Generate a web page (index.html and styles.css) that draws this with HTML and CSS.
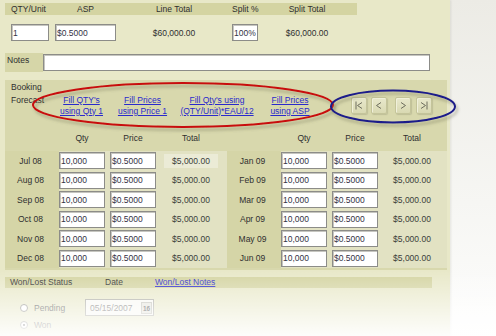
FILE: index.html
```html
<!DOCTYPE html>
<html>
<head>
<meta charset="utf-8">
<link rel="stylesheet" href="styles.css">
</head>
<body>
<div class="page">
  <div class="panel">
    <div class="row5 hdr">
      <span>QTY/Unit</span>
      <span class="asp">ASP</span>
      <span class="c3">Line Total</span>
      <span>Split %</span>
      <span class="ctr">Split Total</span>
    </div>
    <div class="row5 vals">
      <input class="in w38" value="1">
      <input class="in w61" value="$0.5000">
      <span class="c3">$60,000.00</span>
      <input class="in w26" value="100%">
      <span class="ctr">$60,000.00</span>
    </div>
    <div class="notes">
      <span class="notes-lbl">Notes</span>
      <input class="in notes-in" value="">
    </div>

    <div class="booking">
      <div class="bk-top">
        <div class="bk-lbl">Booking<br>Forecast</div>
        <a class="lk l1" href="#">Fill QTY's<br>using Qty 1</a>
        <a class="lk l2" href="#">Fill Prices<br>using Price 1</a>
        <a class="lk l3" href="#">Fill Qty's using<br>(QTY/Unit)*EAU/12</a>
        <a class="lk l4" href="#">Fill Prices<br>using ASP</a>
        <div class="nav">
          <span class="nb"><svg viewBox="0 0 16 17" width="16" height="17"><path d="M5 4.5v8M11 5.5L6.5 8.5L11 11.5" fill="none" stroke="#6e6e5e" stroke-width="1"/></svg></span>
          <span class="nb n2"><svg viewBox="0 0 16 17" width="16" height="17"><path d="M10 5.5L5.5 8.5L10 11.5" fill="none" stroke="#6e6e5e" stroke-width="1"/></svg></span>
          <span class="nb n3"><svg viewBox="0 0 16 17" width="16" height="17"><path d="M6 5.5L10.5 8.5L6 11.5" fill="none" stroke="#6e6e5e" stroke-width="1"/></svg></span>
          <span class="nb n4"><svg viewBox="0 0 16 17" width="16" height="17"><path d="M11 4.5v8M5 5.5L9.5 8.5L5 11.5" fill="none" stroke="#6e6e5e" stroke-width="1"/></svg></span>
        </div>
      </div>
      <div class="bk-grid">
        <span></span><span class="ch">Qty</span><span class="ch">Price</span><span class="ch t">Total</span>
        <span></span><span class="ch">Qty</span><span class="ch">Price</span><span class="ch t">Total</span>

        <span class="m">Jul 08</span><span class="d"><input class="in cell" value="10,000"></span><span class="d"><input class="in cell" value="$0.5000"></span><span class="d tot"><span class="hl">$5,000.00</span></span>
        <span class="m">Jan 09</span><span class="d"><input class="in cell" value="10,000"></span><span class="d"><input class="in cell" value="$0.5000"></span><span class="d tot">$5,000.00</span>

        <span class="m">Aug 08</span><span class="d"><input class="in cell" value="10,000"></span><span class="d"><input class="in cell" value="$0.5000"></span><span class="d tot">$5,000.00</span>
        <span class="m">Feb 09</span><span class="d"><input class="in cell" value="10,000"></span><span class="d"><input class="in cell" value="$0.5000"></span><span class="d tot">$5,000.00</span>

        <span class="m">Sep 08</span><span class="d"><input class="in cell" value="10,000"></span><span class="d"><input class="in cell" value="$0.5000"></span><span class="d tot">$5,000.00</span>
        <span class="m">Mar 09</span><span class="d"><input class="in cell" value="10,000"></span><span class="d"><input class="in cell" value="$0.5000"></span><span class="d tot">$5,000.00</span>

        <span class="m">Oct 08</span><span class="d"><input class="in cell" value="10,000"></span><span class="d"><input class="in cell" value="$0.5000"></span><span class="d tot">$5,000.00</span>
        <span class="m">Apr 09</span><span class="d"><input class="in cell" value="10,000"></span><span class="d"><input class="in cell" value="$0.5000"></span><span class="d tot">$5,000.00</span>

        <span class="m">Nov 08</span><span class="d"><input class="in cell" value="10,000"></span><span class="d"><input class="in cell" value="$0.5000"></span><span class="d tot">$5,000.00</span>
        <span class="m">May 09</span><span class="d"><input class="in cell" value="10,000"></span><span class="d"><input class="in cell" value="$0.5000"></span><span class="d tot">$5,000.00</span>

        <span class="m">Dec 08</span><span class="d"><input class="in cell" value="10,000"></span><span class="d"><input class="in cell" value="$0.5000"></span><span class="d tot">$5,000.00</span>
        <span class="m">Jun 09</span><span class="d"><input class="in cell" value="10,000"></span><span class="d"><input class="in cell" value="$0.5000"></span><span class="d tot">$5,000.00</span>
      </div>
    </div>

    <div class="wl-bar">
      <span class="wl-status">Won/Lost Status</span>
      <span class="wl-date">Date</span>
      <a class="wl-link" href="#">Won/Lost Notes</a>
    </div>
    <div class="wl-body">
      <div class="radios">
        <div class="ro"><span class="rad"></span><span class="rt">Pending</span></div>
        <div class="ro"><span class="rad on"></span><span class="rt">Won</span></div>
        <div class="ro"><span class="rad"></span></div>
      </div>
      <div class="date"><span>05/15/2007</span><span class="cal">16</span></div>
    </div>
  </div>

  <svg class="marks" width="496" height="336" viewBox="0 0 496 336">
    <defs>
      <filter id="sh" x="-10%" y="-30%" width="120%" height="170%">
        <feDropShadow dx="2" dy="3" stdDeviation="1.6" flood-color="#6b6b50" flood-opacity="0.45"/>
      </filter>
    </defs>
    <ellipse cx="183" cy="105" rx="150" ry="22" fill="none" stroke="#c81010" stroke-width="2" filter="url(#sh)"/>
    <ellipse cx="393" cy="106.5" rx="62" ry="16" fill="none" stroke="#1c1c8a" stroke-width="2" filter="url(#sh)"/>
  </svg>
  <div class="fade"></div>
</div>
</body>
</html>
```

FILE: styles.css
```css
* { box-sizing: border-box; }

body {
  margin: 0;
  width: 496px;
  height: 336px;
  overflow: hidden;
  font-family: "Liberation Sans", Arial, sans-serif;
  font-size: 8.5px;
  color: #2f2f2f;
  background: linear-gradient(#ecebe5, #f6f6f3 60%, #fdfdfc);
}

.page {
  position: relative;
  width: 496px;
  height: 336px;
}

.panel {
  width: 450px;
  height: 336px;
  background: #e8e8c8;
  padding-top: 3px;
  box-shadow: 1px 0 2px rgba(120, 120, 100, 0.15);
}

.row5 {
  display: grid;
  grid-template-columns: 44px 67px 110px 50px 50px;
  margin-left: 5px;
  padding-left: 6px;
  align-items: center;
}

.hdr {
  width: 352px;
  height: 12px;
  line-height: 12px;
  background: #d4d4a2;
}

.asp { width: 61px; text-align: center; }
.c3 { text-align: center; padding-right: 6px; }
.ctr { text-align: center; }

.vals {
  margin-top: 9px;
  height: 17px;
}

.in {
  height: 17px;
  margin: 0;
  padding: 0 1px;
  border: 1px solid #8c8c88;
  box-shadow: inset 1px 1px 0 #c6c6c0;
  background: #fff;
  font: inherit;
  color: #334;
  outline: none;
}

.w38 { width: 38px; }
.w61 { width: 61px; }
.w26 { width: 26px; }

.notes {
  display: flex;
  margin: 12px 0 0 5px;
  height: 19px;
}

.notes-lbl {
  width: 38px;
  background: #d6d6a8;
  padding: 2px 0 0 2px;
  line-height: 11px;
}

.notes-in {
  width: 387px;
  margin-top: 1px;
}

.booking {
  margin: 8px 0 0 5px;
  width: 442px;
  background: #d8d8ad;
  padding-bottom: 2px;
}

.bk-top {
  display: flex;
  height: 48px;
}

.bk-lbl {
  width: 50px;
  padding: 1px 0 0 6px;
  line-height: 13px;
}

.lk {
  color: #2a2acc;
  text-decoration: underline;
  text-align: center;
  line-height: 11px;
  margin-top: 14.5px;
  white-space: nowrap;
}

.l1 { width: 53px; }
.l2 { width: 53px; margin-left: 8px; }
.l3 { width: 80px; margin-left: 8px; }
.l4 { width: 50px; margin-left: 8px; }

.nav {
  display: flex;
  margin-left: 36px;
  margin-top: 17px;
  height: 17px;
}

.nb {
  display: block;
  width: 16px;
  height: 17px;
  background: linear-gradient(#e8e8cc, #d9d9b2);
  border: 1px solid #c4c49a;
  border-radius: 2px;
  box-shadow: inset 1px 1px 0 #f0f0da, 1px 1px 1px rgba(120,120,90,0.25);
}

.nb svg { display: block; margin: -1px; }

.n2 { margin-left: 4px; }
.n3 { margin-left: 8px; }
.n4 { margin-left: 5px; }

.bk-grid {
  display: grid;
  grid-template-columns: 54px 51px 51px 66px 54px 51px 51px 64px;
  grid-template-rows: 23px repeat(6, 19.5px);
}

.ch {
  padding: 4px 5px 0 0;
  line-height: 13px;
  text-align: center;
}

.ch.t { padding-right: 6px; }

.m {
  display: flex;
  align-items: center;
  justify-content: center;
  padding-right: 3px;
  background: #d5d5a7;
}

.d {
  display: flex;
  align-items: center;
  background: #e2e2c3;
}

.cell { width: 46px; }

.tot {
  justify-content: center;
  padding-right: 6px;
  color: #3a3f3a;
}

.hl {
  background: #ebebd6;
  padding: 2px 8px;
  margin: 0 -8px;
}

.wl-bar {
  display: flex;
  margin: 7px 0 0 5px;
  width: 427px;
  height: 11px;
  line-height: 11px;
  background: #d4d4a2;
}

.wl-status { width: 100px; padding-left: 5px; }
.wl-date { width: 50px; }
.wl-link { color: #2a2acc; text-decoration: underline; }

.wl-body {
  display: flex;
  margin-top: 11px;
}

.radios {
  margin-left: 20px;
  width: 65px;
}

.ro {
  display: flex;
  align-items: center;
  height: 17px;
}

.rad {
  width: 8px;
  height: 8px;
  border-radius: 50%;
  border: 1px solid #8a8a84;
  background: #fff;
  position: relative;
}

.rad.on::after {
  content: "";
  position: absolute;
  left: 2px;
  top: 2px;
  width: 2px;
  height: 2px;
  border-radius: 50%;
  background: #333;
}

.rt {
  margin-left: 6px;
  color: #555;
}

.date {
  display: flex;
  align-items: center;
  width: 69px;
  height: 17px;
  padding-left: 4px;
  border: 1px solid #a8a8a0;
  background: #f8f8f3;
  color: #777;
}

.cal {
  margin-left: auto;
  margin-right: 1px;
  width: 11px;
  height: 12px;
  font-size: 6.5px;
  font-weight: bold;
  line-height: 12px;
  text-align: center;
  color: #555;
  background: #e4e4dc;
  border: 1px solid #c0c0b8;
}

.marks {
  position: absolute;
  left: 0;
  top: 0;
  pointer-events: none;
}

.fade {
  position: absolute;
  left: 0;
  top: 270px;
  width: 496px;
  height: 66px;
  background: linear-gradient(rgba(255,255,255,0), rgba(255,255,255,0.93));
  pointer-events: none;
}
```
